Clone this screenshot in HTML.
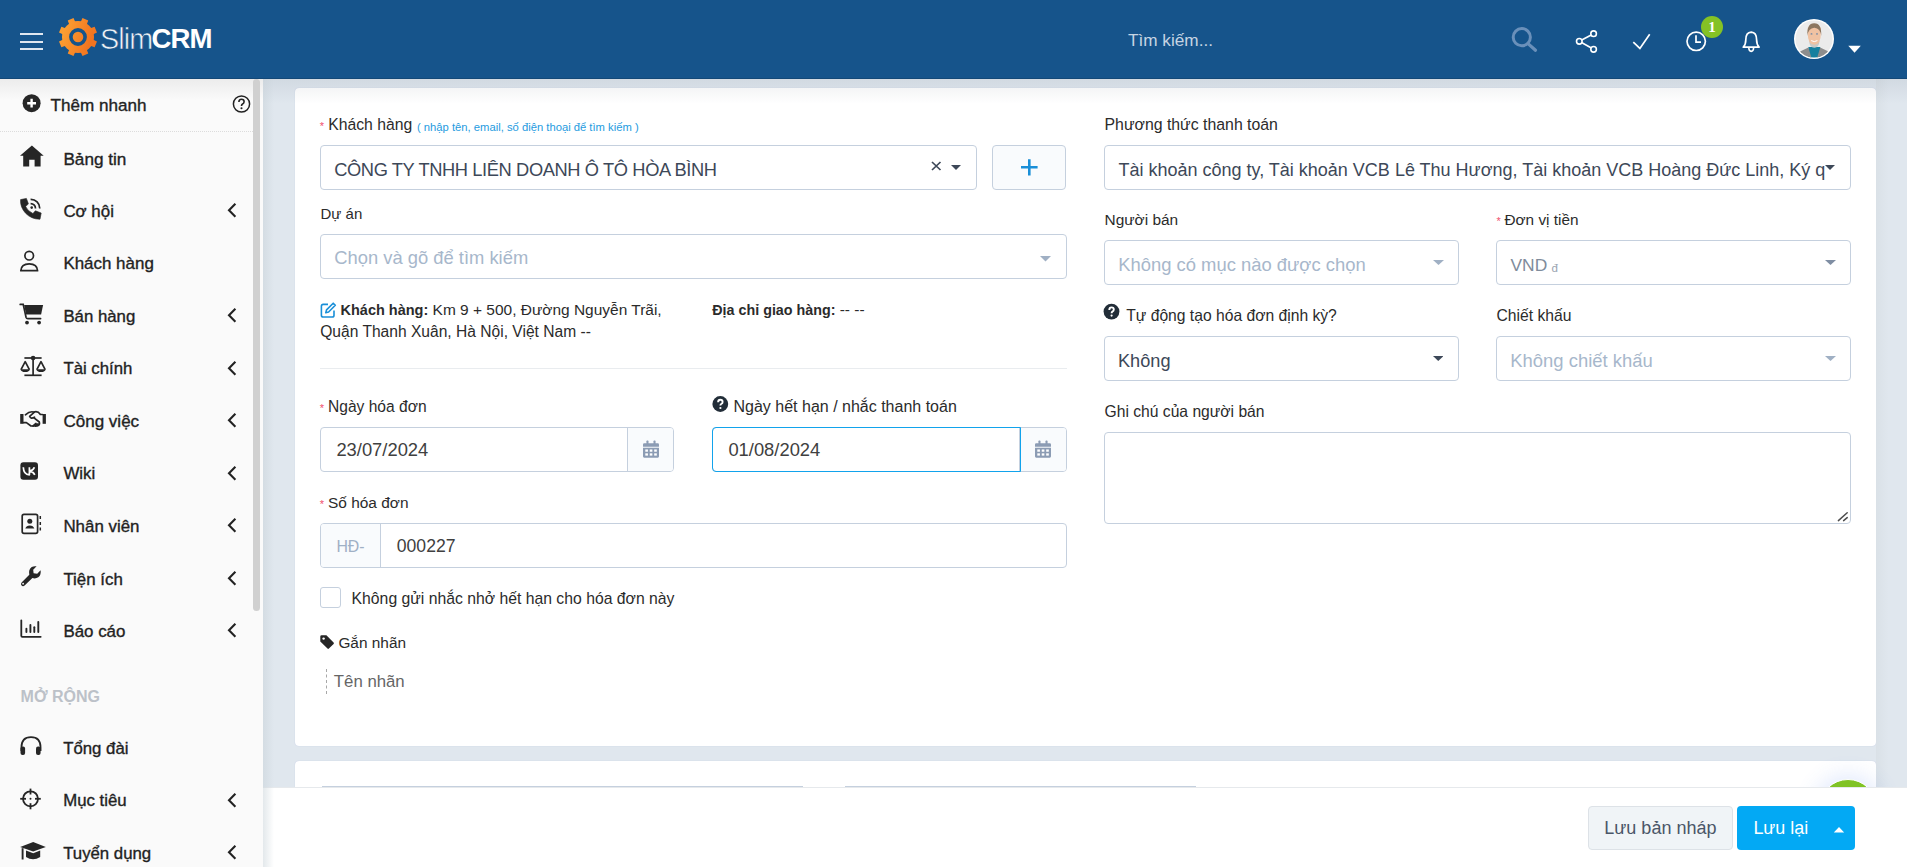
<!DOCTYPE html>
<html><head><meta charset="utf-8"><title>SlimCRM</title>
<style>
html,body{margin:0;padding:0;}
body{width:1907px;height:867px;overflow:hidden;position:relative;font-family:"Liberation Sans",sans-serif;background:#e0e7ee;}
.t{position:absolute;line-height:0;white-space:nowrap;}
</style></head><body>

<div style="position:absolute;left:295px;top:88px;width:1581px;height:658px;background:#fff;border-radius:4px;box-shadow:0 0 1px rgba(90,100,190,0.3);"></div>
<div style="position:absolute;left:295px;top:761px;width:1581px;height:39px;background:#fff;border-radius:4px;box-shadow:0 0 1px rgba(90,100,190,0.3);"></div>
<div style="position:absolute;left:1876px;top:79px;width:31px;height:708px;background:linear-gradient(90deg,#dae1e7,#e0e7ee 40%);"></div>
<div class="t" style="left:319.8px;top:125.99px;font-size:11px;color:#f0506e;font-weight:400;">*</div>
<div class="t" style="left:328.2px;top:124.95px;font-size:15.74px;color:#2b2b2b;font-weight:400;">Khách hàng</div>
<div class="t" style="left:417.0px;top:126.51px;font-size:11.24px;color:#1e9be0;font-weight:400;">( nhập tên, email, số điện thoại để tìm kiếm )</div>
<div style="position:absolute;left:320px;top:145px;width:657px;height:45px;box-sizing:border-box;border:1px solid #c5d0de;border-radius:4px;background:#fff;"></div>
<div class="t" style="left:334.2px;top:169.86px;font-size:18.3px;color:#3d4858;font-weight:400;letter-spacing:-0.39px;">CÔNG TY TNHH LIÊN DOANH Ô TÔ HÒA BÌNH</div>
<svg style="position:absolute;left:930.5px;top:161px;" width="11" height="10" viewBox="0 0 11 10"><path d="M1,1 L9.5,9 M9.5,1 L1,9" stroke="#3d4858" stroke-width="1.7"/></svg>
<svg style="position:absolute;left:951.3px;top:164.8px;" width="10" height="5" viewBox="0 0 10 5"><polygon points="0,0 10,0 5.0,5" fill="#3d4858"/></svg>
<div style="position:absolute;left:992px;top:145px;width:74px;height:45px;box-sizing:border-box;border:1px solid #c5d0de;border-radius:4px;background:#f9fbfd;"></div>
<svg style="position:absolute;left:1020px;top:158px;" width="18" height="18" viewBox="0 0 18 18"><path d="M9.3,1.2 V17.6 M1,9.3 H17.6" stroke="#1a8fd8" stroke-width="2.6"/></svg>
<div class="t" style="left:320.5px;top:214.10px;font-size:15.0px;color:#2b2b2b;font-weight:400;">Dự án</div>
<div style="position:absolute;left:320px;top:234px;width:747px;height:45px;box-sizing:border-box;border:1px solid #c5d0de;border-radius:4px;background:#fff;"></div>
<div class="t" style="left:334.3px;top:258.43px;font-size:18.37px;color:#a7b7cb;font-weight:400;">Chọn và gõ để tìm kiếm</div>
<svg style="position:absolute;left:1040px;top:256px;" width="11" height="5.5" viewBox="0 0 11 5.5"><polygon points="0,0 11,0 5.5,5.5" fill="#a0b0c4"/></svg>
<svg style="position:absolute;left:319.5px;top:300.5px;" width="17" height="17" viewBox="0 0 17 17"><path d="M13.2,2.2 L15.3,4.3 L8.6,11 L5.8,11.7 L6.5,8.9 Z" fill="none" stroke="#1a8fd8" stroke-width="1.6" stroke-linejoin="round"/><path d="M8,3.4 H3.2 Q1.4,3.4 1.4,5.2 V14.2 Q1.4,16 3.2,16 H12.2 Q14,16 14,14.2 V9.4" fill="none" stroke="#1a8fd8" stroke-width="1.6"/></svg>
<div class="t" style="left:340.5px;top:309.94px;font-size:15.47px;color:#2b2b2b;font-weight:400;"><b style="font-size:14.5px">Khách hàng:</b> Km 9 + 500, Đường Nguyễn Trãi,</div>
<div class="t" style="left:320.2px;top:332.39px;font-size:15.6px;color:#2b2b2b;font-weight:400;">Quận Thanh Xuân, Hà Nội, Việt Nam --</div>
<div class="t" style="left:712.3px;top:309.94px;font-size:15.47px;color:#2b2b2b;font-weight:400;"><b style="font-size:14.3px">Địa chỉ giao hàng:</b> -- --</div>
<div style="position:absolute;left:320px;top:368px;width:747px;height:1px;background:#e9ecef;"></div>
<div class="t" style="left:319.8px;top:407.99px;font-size:11px;color:#f0506e;font-weight:400;">*</div>
<div class="t" style="left:328.0px;top:407.00px;font-size:15.58px;color:#2b2b2b;font-weight:400;">Ngày hóa đơn</div>
<div style="position:absolute;left:320px;top:427px;width:354px;height:45px;box-sizing:border-box;border:1px solid #c5d0de;border-radius:4px;background:#fff;"></div>
<div style="position:absolute;left:627px;top:428px;width:46px;height:43px;background:#f9fbfd;border-radius:0 3px 3px 0;"></div>
<div style="position:absolute;left:627px;top:428px;width:1px;height:43px;background:#c5d0de;"></div>
<div class="t" style="left:336.4px;top:450.43px;font-size:18.38px;color:#404040;font-weight:400;">23/07/2024</div>
<svg style="position:absolute;left:642px;top:438.5px;transform:scale(1.14);transform-origin:9px 10px;" width="18" height="20" viewBox="0 0 18 20"><path d="M3,5 H15 Q16,5 16,6 V8 H2 V6 Q2,5 3,5 Z M2,9 H16 V16.6 Q16,17.6 15,17.6 H3 Q2,17.6 2,16.6 Z" fill="#8c9cb4"/><rect x="5" y="2.6" width="1.8" height="3.6" rx="0.6" fill="#8c9cb4"/><rect x="11.2" y="2.6" width="1.8" height="3.6" rx="0.6" fill="#8c9cb4"/><g fill="#fff"><rect x="4" y="10.4" width="2.3" height="2"/><rect x="7.9" y="10.4" width="2.3" height="2"/><rect x="11.8" y="10.4" width="2.3" height="2"/><rect x="4" y="13.8" width="2.3" height="2"/><rect x="7.9" y="13.8" width="2.3" height="2"/><rect x="11.8" y="13.8" width="2.3" height="2"/></g></svg>
<svg style="position:absolute;left:711.5px;top:395.5px;" width="17" height="17" viewBox="0 0 17 17"><circle cx="8.3" cy="8" r="7.9" fill="#222d38"/><path d="M6.1,6.3 Q6.1,3.8 8.3,3.8 Q10.6,3.8 10.6,6 Q10.6,7.3 9.2,8 Q8.4,8.5 8.4,9.6" fill="none" stroke="#fff" stroke-width="1.9"/><circle cx="8.4" cy="12" r="1.1" fill="#fff"/></svg>
<div class="t" style="left:733.5px;top:406.86px;font-size:16.0px;color:#2b2b2b;font-weight:400;">Ngày hết hạn / nhắc thanh toán</div>
<div style="position:absolute;left:712px;top:427px;width:355px;height:45px;box-sizing:border-box;border:1px solid #c5d0de;border-radius:4px;background:#fff;"></div>
<div style="position:absolute;left:1019px;top:428px;width:47px;height:43px;background:#f9fbfd;border-radius:0 3px 3px 0;"></div>
<div style="position:absolute;left:1019px;top:428px;width:1px;height:43px;background:#c5d0de;"></div>
<div style="position:absolute;left:712px;top:427px;width:309px;height:45px;box-sizing:border-box;border:1.3px solid #12a3ec;border-radius:4px 0 0 4px;"></div>
<div class="t" style="left:728.4px;top:450.43px;font-size:18.38px;color:#404040;font-weight:400;">01/08/2024</div>
<svg style="position:absolute;left:1034px;top:438.5px;transform:scale(1.14);transform-origin:9px 10px;" width="18" height="20" viewBox="0 0 18 20"><path d="M3,5 H15 Q16,5 16,6 V8 H2 V6 Q2,5 3,5 Z M2,9 H16 V16.6 Q16,17.6 15,17.6 H3 Q2,17.6 2,16.6 Z" fill="#8c9cb4"/><rect x="5" y="2.6" width="1.8" height="3.6" rx="0.6" fill="#8c9cb4"/><rect x="11.2" y="2.6" width="1.8" height="3.6" rx="0.6" fill="#8c9cb4"/><g fill="#fff"><rect x="4" y="10.4" width="2.3" height="2"/><rect x="7.9" y="10.4" width="2.3" height="2"/><rect x="11.8" y="10.4" width="2.3" height="2"/><rect x="4" y="13.8" width="2.3" height="2"/><rect x="7.9" y="13.8" width="2.3" height="2"/><rect x="11.8" y="13.8" width="2.3" height="2"/></g></svg>
<div class="t" style="left:319.8px;top:503.99px;font-size:11px;color:#f0506e;font-weight:400;">*</div>
<div class="t" style="left:328.0px;top:503.05px;font-size:15.45px;color:#2b2b2b;font-weight:400;">Số hóa đơn</div>
<div style="position:absolute;left:320px;top:523px;width:747px;height:45px;box-sizing:border-box;border:1px solid #c5d0de;border-radius:4px;background:#fff;"></div>
<div style="position:absolute;left:321px;top:524px;width:59px;height:43px;background:#f9fbfd;border-radius:3px 0 0 3px;"></div>
<div style="position:absolute;left:380px;top:524px;width:1px;height:43px;background:#c5d0de;"></div>
<div class="t" style="left:336.4px;top:546.69px;font-size:15.9px;color:#a0b0c5;font-weight:400;">HĐ-</div>
<div class="t" style="left:396.8px;top:546.10px;font-size:17.6px;color:#404040;font-weight:400;">000227</div>
<div style="position:absolute;left:320px;top:587px;width:21px;height:21px;box-sizing:border-box;border:1px solid #c5d0de;border-radius:3px;background:#fff;"></div>
<div class="t" style="left:351.6px;top:598.54px;font-size:15.75px;color:#2b2b2b;font-weight:400;">Không gửi nhắc nhở hết hạn cho hóa đơn này</div>
<svg style="position:absolute;left:318.5px;top:634px;" width="16" height="16" viewBox="0 0 16 16"><path d="M1.3,2.6 Q1.3,1.3 2.6,1.3 L7.4,1.3 L14.6,8.5 Q15.3,9.2 14.6,9.9 L9.9,14.6 Q9.2,15.3 8.5,14.6 L1.3,7.4 Z" fill="#262626"/><circle cx="4.6" cy="4.6" r="1.2" fill="#fff"/></svg>
<div class="t" style="left:338.4px;top:642.66px;font-size:15.4px;color:#2b2b2b;font-weight:400;">Gắn nhãn</div>
<div style="position:absolute;left:326px;top:669px;width:0;height:25px;border-left:1px dashed #a8a8a8;"></div>
<div class="t" style="left:333.8px;top:682.18px;font-size:16.8px;color:#666;font-weight:400;">Tên nhãn</div>
<div class="t" style="left:1104.5px;top:124.91px;font-size:15.85px;color:#2b2b2b;font-weight:400;">Phương thức thanh toán</div>
<div style="position:absolute;left:1104px;top:145px;width:747px;height:45px;box-sizing:border-box;border:1px solid #c5d0de;border-radius:4px;background:#fff;"></div>
<div style="position:absolute;left:1118px;top:150px;width:707px;height:36px;overflow:hidden;"><div class="t" style="left:0.4px;top:20.26px;font-size:18.0px;color:#3d4858;">Tài khoản công ty, Tài khoản VCB Lê Thu Hương, Tài khoản VCB Hoàng Đức Linh, Ký quỹ</div></div>
<svg style="position:absolute;left:1825px;top:165.2px;" width="10" height="5" viewBox="0 0 10 5"><polygon points="0,0 10,0 5.0,5" fill="#3d4858"/></svg>
<div class="t" style="left:1104.5px;top:219.85px;font-size:15.44px;color:#2b2b2b;font-weight:400;">Người bán</div>
<div style="position:absolute;left:1104px;top:240px;width:355px;height:45px;box-sizing:border-box;border:1px solid #c5d0de;border-radius:4px;background:#fff;"></div>
<div class="t" style="left:1118.2px;top:264.82px;font-size:18.42px;color:#a7b7cb;font-weight:400;">Không có mục nào được chọn</div>
<svg style="position:absolute;left:1432.5px;top:260.3px;" width="11" height="5" viewBox="0 0 11 5"><polygon points="0,0 11,0 5.5,5" fill="#a0b0c4"/></svg>
<div class="t" style="left:1496.5px;top:220.79px;font-size:11px;color:#f0506e;font-weight:400;">*</div>
<div class="t" style="left:1504.5px;top:219.88px;font-size:15.34px;color:#2b2b2b;font-weight:400;">Đơn vị tiền</div>
<div style="position:absolute;left:1496px;top:240px;width:355px;height:45px;box-sizing:border-box;border:1px solid #c5d0de;border-radius:4px;background:#fff;"></div>
<div class="t" style="left:1510.5px;top:265.17px;font-size:17.4px;color:#7f8c9c;font-weight:400;">VND</div>
<div class="t" style="left:1551.5px;top:267.52px;font-size:11.5px;color:#98a3b0;font-weight:400;">đ</div>
<svg style="position:absolute;left:1824.5px;top:260.3px;" width="11" height="5" viewBox="0 0 11 5"><polygon points="0,0 11,0 5.5,5" fill="#7f8ea3"/></svg>
<svg style="position:absolute;left:1103px;top:303px;" width="18" height="18" viewBox="0 0 18 18"><circle cx="8.5" cy="8.6" r="7.9" fill="#222d38"/><path d="M6.3,6.9 Q6.3,4.4 8.5,4.4 Q10.8,4.4 10.8,6.6 Q10.8,7.9 9.4,8.6 Q8.6,9.1 8.6,10.2" fill="none" stroke="#fff" stroke-width="1.9"/><circle cx="8.6" cy="12.6" r="1.1" fill="#fff"/></svg>
<div class="t" style="left:1126.3px;top:316.07px;font-size:15.66px;color:#2b2b2b;font-weight:400;">Tự động tạo hóa đơn định kỳ?</div>
<div style="position:absolute;left:1104px;top:336px;width:355px;height:45px;box-sizing:border-box;border:1px solid #c5d0de;border-radius:4px;background:#fff;"></div>
<div class="t" style="left:1118.0px;top:361.31px;font-size:18.16px;color:#3d4858;font-weight:400;">Không</div>
<svg style="position:absolute;left:1432.7px;top:356px;" width="10.5" height="5" viewBox="0 0 10.5 5"><polygon points="0,0 10.5,0 5.25,5" fill="#3d4858"/></svg>
<div class="t" style="left:1496.5px;top:316.06px;font-size:15.69px;color:#2b2b2b;font-weight:400;">Chiết khấu</div>
<div style="position:absolute;left:1496px;top:336px;width:355px;height:45px;box-sizing:border-box;border:1px solid #c5d0de;border-radius:4px;background:#fff;"></div>
<div class="t" style="left:1510.3px;top:361.21px;font-size:18.45px;color:#a7b7cb;font-weight:400;">Không chiết khấu</div>
<svg style="position:absolute;left:1824.5px;top:356.3px;" width="11" height="5" viewBox="0 0 11 5"><polygon points="0,0 11,0 5.5,5" fill="#a0b0c4"/></svg>
<div class="t" style="left:1104.5px;top:411.87px;font-size:15.66px;color:#2b2b2b;font-weight:400;">Ghi chú của người bán</div>
<textarea style="position:absolute;left:1104px;top:432px;width:747px;height:92px;box-sizing:border-box;border:1px solid #c5d0de;border-radius:4px;background:#fff;outline:none;margin:0;padding:0;resize:none;"></textarea>
<svg style="position:absolute;left:1834px;top:509px;" width="16" height="14" viewBox="0 0 16 14"><g stroke="#4d4d4d" stroke-width="1.5" stroke-linecap="round"><line x1="4.4" y1="11.6" x2="13.2" y2="3.8"/><line x1="9.6" y1="11.6" x2="13.2" y2="8.6"/></g></svg>
<div style="position:absolute;left:322px;top:786px;width:481px;height:1px;background:#c5d0de;"></div>
<div style="position:absolute;left:845px;top:786px;width:351px;height:1px;background:#c5d0de;"></div>
<div style="position:absolute;left:1819px;top:778.8px;width:58px;height:58px;box-sizing:border-box;border:1.2px solid #fff;border-radius:50%;background:#80c325;box-shadow:0 0 22px 4px rgba(70,120,240,0.16);"></div>
<div style="position:absolute;left:263px;top:79px;width:1644px;height:25px;background:linear-gradient(rgba(30,50,70,0.075),rgba(30,50,70,0));"></div>
<div style="position:absolute;left:263px;top:787px;width:1644px;height:80px;background:#fff;border-top:1px solid #e6e9ec;box-sizing:border-box;"></div>
<div style="position:absolute;left:1588px;top:806px;width:145px;height:44px;box-sizing:border-box;border:1px solid #dde2e7;border-radius:4px;background:#f0f4f7;"></div>
<div class="t" style="left:1604.3px;top:827.56px;font-size:18.0px;color:#4a5668;font-weight:400;">Lưu bản nháp</div>
<div style="position:absolute;left:1737px;top:806px;width:118px;height:44px;border-radius:4px;background:#03a9f4;"></div>
<div class="t" style="left:1753.4px;top:827.60px;font-size:17.9px;color:#fff;font-weight:400;">Lưu lại</div>
<svg style="position:absolute;left:1833px;top:826px;" width="12" height="7" viewBox="0 0 12 7"><polygon points="0.8,6.5 11.2,6.5 6,1" fill="#fff"/></svg>
<div style="position:absolute;left:0px;top:79px;width:263px;height:788px;background:#fafafa;"></div>
<div style="position:absolute;left:0px;top:79px;width:263px;height:21px;background:linear-gradient(#ececec,rgba(250,250,250,0));"></div>
<div style="position:absolute;left:263px;top:79px;width:11px;height:788px;background:linear-gradient(90deg,rgba(200,210,216,0.5),rgba(224,231,238,0));"></div>
<div style="position:absolute;left:253px;top:79px;width:7px;height:532px;border-radius:3.5px;background:#d0d0d0;"></div>
<svg style="position:absolute;left:22px;top:94px;" width="20" height="20" viewBox="0 0 20 20"><circle cx="9.6" cy="9.2" r="9" fill="#262626"/><path d="M9.6,4.8 V13.6 M5.2,9.2 H14" stroke="#fff" stroke-width="2.4"/></svg>
<div class="t" style="left:50.5px;top:105.87px;font-size:17.1px;color:#222;font-weight:400;-webkit-text-stroke:0.35px #222;">Thêm nhanh</div>
<svg style="position:absolute;left:231px;top:94px;" width="20" height="20" viewBox="0 0 20 20"><circle cx="10.5" cy="10" r="8.1" fill="none" stroke="#222" stroke-width="1.5"/><path d="M7.9,8.1 Q7.9,5.3 10.5,5.3 Q13.1,5.3 13.1,7.7 Q13.1,9.3 11.3,10.2 Q10.5,10.7 10.5,11.9" fill="none" stroke="#222" stroke-width="1.6"/><circle cx="10.5" cy="14.3" r="1.05" fill="#222"/></svg>
<div style="position:absolute;left:0;top:131px;width:253px;height:0;border-top:1px dotted #dcdcdc;"></div>
<svg style="position:absolute;left:14px;top:138px;" width="36" height="36" viewBox="0 0 36 36"><path d="M6,17.8 L17.9,7.6 L29.7,17.8 L26.6,17.8 L26.6,28.4 L20.6,28.4 L20.6,21.8 L15.2,21.8 L15.2,28.4 L9.2,28.4 L9.2,17.8 Z" fill="#262626"/></svg>
<div class="t" style="left:63.4px;top:159.05px;font-size:17.17px;color:#222;font-weight:400;-webkit-text-stroke:0.35px #222;">Bảng tin</div>
<svg style="position:absolute;left:14px;top:190px;" width="36" height="36" viewBox="0 0 36 36"><path d="M6.6,9.6 L12.4,8.4 L14.4,13.8 L11.7,16.6 Q13.6,20.9 18.9,23.5 L21.4,20.8 L27.2,23 L26,29.2 C14.5,29.5 5.6,19.5 6.6,9.6 Z" fill="#262626" stroke="#262626" stroke-width="0.6" stroke-linejoin="round"/><circle cx="17.7" cy="17.6" r="1.3" fill="#262626"/><path d="M16.6,13.6 A4.8,4.8 0 0 1 21.5,18.4" fill="none" stroke="#262626" stroke-width="1.7"/><path d="M16.6,9.4 A9,9 0 0 1 25.8,18.4" fill="none" stroke="#262626" stroke-width="1.7"/></svg>
<div class="t" style="left:63.4px;top:211.69px;font-size:16.9px;color:#222;font-weight:400;-webkit-text-stroke:0.35px #222;">Cơ hội</div>
<svg style="position:absolute;left:224px;top:202px;" width="14" height="16" viewBox="0 0 14 16"><polyline points="11.4,1.8 5,8.3 11.4,14.8" fill="none" stroke="#222" stroke-width="2.1"/></svg>
<svg style="position:absolute;left:14px;top:243px;" width="36" height="36" viewBox="0 0 36 36"><circle cx="15.2" cy="12.7" r="4.3" fill="none" stroke="#262626" stroke-width="1.7"/><path d="M6.8,27.7 Q7.2,20.8 15.2,20.8 Q23.2,20.8 23.6,27.7 Z" fill="none" stroke="#262626" stroke-width="1.7" stroke-linejoin="round"/></svg>
<div class="t" style="left:63.4px;top:264.23px;font-size:16.94px;color:#222;font-weight:400;-webkit-text-stroke:0.35px #222;">Khách hàng</div>
<svg style="position:absolute;left:14px;top:295px;" width="36" height="36" viewBox="0 0 36 36"><path d="M6.2,9.4 L9.2,9.4 L12.1,22.4 Q12.5,23.6 13.8,23.6 L26.6,23.6" fill="none" stroke="#262626" stroke-width="1.7" stroke-linecap="round"/><path d="M10.1,10.1 L29.1,10.1 L27.1,19.4 L12.1,19.4 Z" fill="#262626"/><circle cx="13" cy="27.6" r="1.9" fill="#262626"/><circle cx="25.1" cy="27.6" r="1.9" fill="#262626"/></svg>
<div class="t" style="left:63.4px;top:316.83px;font-size:16.79px;color:#222;font-weight:400;-webkit-text-stroke:0.35px #222;">Bán hàng</div>
<svg style="position:absolute;left:224px;top:307px;" width="14" height="16" viewBox="0 0 14 16"><polyline points="11.4,1.8 5,8.3 11.4,14.8" fill="none" stroke="#222" stroke-width="2.1"/></svg>
<svg style="position:absolute;left:14px;top:348px;" width="36" height="36" viewBox="0 0 36 36"><g fill="none" stroke="#262626" stroke-width="1.7" stroke-linejoin="round"><line x1="10.4" y1="10" x2="27.6" y2="10"/><line x1="10.4" y1="27.3" x2="27.6" y2="27.3"/><line x1="19.1" y1="10" x2="19.1" y2="27.3"/><path d="M7,21.7 L11.2,13.7 L15.4,21.7"/><path d="M22.8,21.7 L27,13.7 L31.2,21.7"/></g><circle cx="19.1" cy="10" r="2.3" fill="#262626"/><path d="M6.5,21.2 L15.9,21.2 Q15.4,24 11.2,24 Q7,24 6.5,21.2 Z M22.3,21.2 L31.7,21.2 Q31.2,24 27,24 Q22.8,24 22.3,21.2 Z" fill="#262626"/></svg>
<div class="t" style="left:63.4px;top:369.39px;font-size:16.77px;color:#222;font-weight:400;-webkit-text-stroke:0.35px #222;">Tài chính</div>
<svg style="position:absolute;left:224px;top:360px;" width="14" height="16" viewBox="0 0 14 16"><polyline points="11.4,1.8 5,8.3 11.4,14.8" fill="none" stroke="#222" stroke-width="2.1"/></svg>
<svg style="position:absolute;left:14px;top:400px;" width="36" height="36" viewBox="0 0 36 36"><g fill="none" stroke="#262626" stroke-width="1.7" stroke-linejoin="round" stroke-linecap="round"><path d="M9.6,22.6 L12.4,22.6 L17,26 L23.2,26 Q26.2,25 25.3,22 L20,17.8"/><path d="M11.4,14.8 Q16,10.6 20.4,12.2 L15.6,16.3 Q16.6,19.4 20.5,17.2"/><path d="M20,12 Q23.8,10.6 26.4,14.5 L28.4,14.5"/><path d="M19,26 L22,23.5 M21.5,26 L24,24"/></g><rect x="6.2" y="14" width="3.3" height="9.8" fill="#262626"/><rect x="28.6" y="14" width="3.3" height="9.8" fill="#262626"/></svg>
<div class="t" style="left:63.4px;top:421.84px;font-size:17.05px;color:#222;font-weight:400;-webkit-text-stroke:0.35px #222;">Công việc</div>
<svg style="position:absolute;left:224px;top:412px;" width="14" height="16" viewBox="0 0 14 16"><polyline points="11.4,1.8 5,8.3 11.4,14.8" fill="none" stroke="#222" stroke-width="2.1"/></svg>
<svg style="position:absolute;left:14px;top:455px;" width="36" height="36" viewBox="0 0 36 36"><rect x="6.4" y="7.2" width="17.6" height="17.6" rx="3" fill="#262626"/><path d="M9.3,12.2 Q9.6,19.6 15.4,19.8 L15.4,12.2 M15.4,16.2 Q19.2,15.6 20.4,12.2 M15.4,16.2 Q19.2,16.8 20.8,19.8" fill="none" stroke="#fff" stroke-width="1.7" stroke-linejoin="round"/></svg>
<div class="t" style="left:63.4px;top:474.44px;font-size:16.9px;color:#222;font-weight:400;-webkit-text-stroke:0.35px #222;">Wiki</div>
<svg style="position:absolute;left:224px;top:465px;" width="14" height="16" viewBox="0 0 14 16"><polyline points="11.4,1.8 5,8.3 11.4,14.8" fill="none" stroke="#222" stroke-width="2.1"/></svg>
<svg style="position:absolute;left:14px;top:508px;" width="36" height="36" viewBox="0 0 36 36"><rect x="8.2" y="6.4" width="15.4" height="19" rx="1.8" fill="none" stroke="#262626" stroke-width="1.7"/><circle cx="15.8" cy="13.3" r="2.5" fill="#262626"/><path d="M11.3,20.6 Q12.3,17.6 15.8,17.6 Q19.3,17.6 20.3,20.6 Z" fill="#262626"/><path d="M26.3,8 V11 M26.3,14 V17 M26.3,19.4 V22.5" stroke="#262626" stroke-width="1.5"/></svg>
<div class="t" style="left:63.4px;top:526.99px;font-size:16.9px;color:#222;font-weight:400;-webkit-text-stroke:0.35px #222;">Nhân viên</div>
<svg style="position:absolute;left:224px;top:517px;" width="14" height="16" viewBox="0 0 14 16"><polyline points="11.4,1.8 5,8.3 11.4,14.8" fill="none" stroke="#222" stroke-width="2.1"/></svg>
<svg style="position:absolute;left:14px;top:560px;" width="36" height="36" viewBox="0 0 36 36"><path d="M7.6,22.4 L15.3,14.8 Q14.2,9.6 17.7,7.1 Q19.9,5.8 22.6,6.3 L19.2,9.8 L19.6,13.2 L23.2,13.7 L26.6,10.2 Q27.4,14.8 24.3,17.3 Q21.4,19.1 18.4,18 L10.6,25.6 Q8.7,26.8 7.4,25.3 Q6.4,23.7 7.6,22.4 Z" fill="#262626"/><circle cx="9.1" cy="23.7" r="0.9" fill="#f9f9f9"/></svg>
<div class="t" style="left:63.4px;top:579.54px;font-size:16.9px;color:#222;font-weight:400;-webkit-text-stroke:0.35px #222;">Tiện ích</div>
<svg style="position:absolute;left:224px;top:570px;" width="14" height="16" viewBox="0 0 14 16"><polyline points="11.4,1.8 5,8.3 11.4,14.8" fill="none" stroke="#222" stroke-width="2.1"/></svg>
<svg style="position:absolute;left:14px;top:613px;" width="36" height="36" viewBox="0 0 36 36"><path d="M7.3,7.3 V22.8 Q7.3,23.8 8.3,23.8 H26.7" fill="none" stroke="#262626" stroke-width="1.8" stroke-linecap="round"/><g stroke="#262626" stroke-width="1.9" stroke-linecap="round"><line x1="12.4" y1="15.8" x2="12.4" y2="19.1"/><line x1="16.4" y1="11.9" x2="16.4" y2="19.1"/><line x1="20.3" y1="14.2" x2="20.3" y2="19.1"/><line x1="24.3" y1="9" x2="24.3" y2="19.1"/></g></svg>
<div class="t" style="left:63.4px;top:632.09px;font-size:16.9px;color:#222;font-weight:400;-webkit-text-stroke:0.35px #222;">Báo cáo</div>
<svg style="position:absolute;left:224px;top:622px;" width="14" height="16" viewBox="0 0 14 16"><polyline points="11.4,1.8 5,8.3 11.4,14.8" fill="none" stroke="#222" stroke-width="2.1"/></svg>
<div class="t" style="left:20.6px;top:697.16px;font-size:16.0px;color:#bcc1c8;font-weight:700;">MỞ RỘNG</div>
<svg style="position:absolute;left:14px;top:730px;" width="36" height="36" viewBox="0 0 36 36"><path d="M7.4,21 V17.6 Q7.4,7.2 17,7.2 Q26.6,7.2 26.6,17.6 V21" fill="none" stroke="#262626" stroke-width="1.7"/><rect x="6.5" y="16.5" width="4.6" height="8.5" rx="2" fill="#262626"/><rect x="22" y="16.5" width="4.6" height="8.5" rx="2" fill="#262626"/></svg>
<div class="t" style="left:63.2px;top:748.98px;font-size:16.8px;color:#222;font-weight:400;-webkit-text-stroke:0.35px #222;">Tổng đài</div>
<svg style="position:absolute;left:14px;top:783px;" width="36" height="36" viewBox="0 0 36 36"><circle cx="16.5" cy="15.8" r="7.5" fill="none" stroke="#262626" stroke-width="1.8"/><g stroke="#262626" stroke-width="1.8"><line x1="16.5" y1="5.6" x2="16.5" y2="11.5"/><line x1="16.5" y1="20.2" x2="16.5" y2="26.3"/><line x1="6.2" y1="15.8" x2="12" y2="15.8"/><line x1="21" y1="15.8" x2="26.8" y2="15.8"/></g><circle cx="16.5" cy="15.8" r="1" fill="#262626"/></svg>
<div class="t" style="left:63.2px;top:801.38px;font-size:16.8px;color:#222;font-weight:400;-webkit-text-stroke:0.35px #222;">Mục tiêu</div>
<svg style="position:absolute;left:224px;top:792px;" width="14" height="16" viewBox="0 0 14 16"><polyline points="11.4,1.8 5,8.3 11.4,14.8" fill="none" stroke="#222" stroke-width="2.1"/></svg>
<svg style="position:absolute;left:14px;top:835px;" width="36" height="36" viewBox="0 0 36 36"><path d="M6.2,12 L19.2,7 L31.8,12 L19.2,16.5 Z" fill="#262626"/><path d="M12,15.5 V22 Q19,26.5 26.2,22 V15.5 L19.2,18.2 Z" fill="#262626"/><path d="M8.6,13.2 V24.5" stroke="#262626" stroke-width="1.9"/></svg>
<div class="t" style="left:63.2px;top:853.68px;font-size:16.8px;color:#222;font-weight:400;-webkit-text-stroke:0.35px #222;">Tuyển dụng</div>
<svg style="position:absolute;left:224px;top:844px;" width="14" height="16" viewBox="0 0 14 16"><polyline points="11.4,1.8 5,8.3 11.4,14.8" fill="none" stroke="#222" stroke-width="2.1"/></svg>
<div style="position:absolute;left:0px;top:0px;width:1907px;height:79px;background:#16548b;"></div>
<div style="position:absolute;left:0px;top:78px;width:1907px;height:1px;background:#134877;"></div>
<div style="position:absolute;left:20px;top:33.1px;width:23px;height:2px;background:#dfe7f0;"></div>
<div style="position:absolute;left:20px;top:40.7px;width:23px;height:2px;background:#dfe7f0;"></div>
<div style="position:absolute;left:20px;top:47.9px;width:23px;height:2px;background:#dfe7f0;"></div>
<svg style="position:absolute;left:57.5px;top:17.3px;" width="40" height="40" viewBox="0 0 40 40"><defs><linearGradient id="gg" x1="0" y1="0" x2="1" y2="0.3"><stop offset="0" stop-color="#fda535"/><stop offset="1" stop-color="#f2741f"/></linearGradient></defs>
<path d="M22.35,5.69 L24.50,1.03 L30.24,3.40 L28.46,8.22 L31.78,11.54 L36.60,9.76 L38.97,15.50 L34.31,17.65 L34.31,22.35 L38.97,24.50 L36.60,30.24 L31.78,28.46 L28.46,31.78 L30.24,36.60 L24.50,38.97 L22.35,34.31 L17.65,34.31 L15.50,38.97 L9.76,36.60 L11.54,31.78 L8.22,28.46 L3.40,30.24 L1.03,24.50 L5.69,22.35 L5.69,17.65 L1.03,15.50 L3.40,9.76 L8.22,11.54 L11.54,8.22 L9.76,3.40 L15.50,1.03 L17.65,5.69 Z" fill="url(#gg)"/>
<circle cx="20" cy="20" r="16" fill="url(#gg)"/>
<circle cx="20" cy="20" r="7.1" fill="none" stroke="#16548b" stroke-width="3.6"/></svg>
<div class="t" style="left:100.0px;top:38.52px;font-size:28.8px;color:#eef2f6;font-weight:400;letter-spacing:-0.9px;-webkit-text-stroke:0.6px #16548b;">Slim</div>
<div class="t" style="left:151.5px;top:38.94px;font-size:27.6px;color:#ffffff;font-weight:700;letter-spacing:-0.9px;">CRM</div>
<div class="t" style="left:1128.0px;top:39.84px;font-size:17.2px;color:#c6d4e3;font-weight:400;">Tìm kiếm...</div>
<svg style="position:absolute;left:1505px;top:20px;" width="36" height="36" viewBox="0 0 36 36"><circle cx="16.8" cy="17.2" r="8.6" fill="none" stroke="#6a90ba" stroke-width="3"/><line x1="23" y1="23.6" x2="30.5" y2="30.3" stroke="#6a90ba" stroke-width="3.2" stroke-linecap="round"/></svg>
<svg style="position:absolute;left:1570px;top:20px;" width="36" height="36" viewBox="0 0 36 36"><g fill="none" stroke="#fff" stroke-width="1.6"><line x1="9.3" y1="21.3" x2="23.6" y2="13.7"/><line x1="9.3" y1="21.3" x2="23.6" y2="29.3"/><circle cx="9.3" cy="21.3" r="2.8" fill="#16548b"/><circle cx="23.6" cy="13.7" r="2.8" fill="#16548b"/><circle cx="23.6" cy="29.3" r="2.8" fill="#16548b"/></g></svg>
<svg style="position:absolute;left:1625px;top:20px;" width="36" height="36" viewBox="0 0 36 36"><polyline points="8.3,22.2 14.9,28.4 24.7,14.2" fill="none" stroke="#fff" stroke-width="1.7"/></svg>
<svg style="position:absolute;left:1678px;top:23px;" width="36" height="36" viewBox="0 0 36 36"><circle cx="18.2" cy="18.3" r="9.2" fill="none" stroke="#fff" stroke-width="1.7"/><polyline points="18,12.2 18,19.1 23,19.1" fill="none" stroke="#fff" stroke-width="1.7"/></svg>
<div style="position:absolute;left:1701px;top:15.8px;width:22px;height:22px;border-radius:50%;background:#84c225;"></div>
<div class="t" style="left:1701px;top:27px;width:22px;text-align:center;font-family:'Liberation Serif',serif;font-weight:700;font-size:15px;color:#fff;">1</div>
<svg style="position:absolute;left:1733px;top:23px;" width="36" height="36" viewBox="0 0 36 36"><path d="M10.3,24.2 Q12.8,21.6 12.8,16.8 Q12.8,9.6 18.2,9.2 Q23.6,9.6 23.6,16.8 Q23.6,21.6 26.1,24.2 Z" fill="none" stroke="#fff" stroke-width="1.7" stroke-linejoin="round"/><path d="M15.8,25 Q16,28.2 18.2,28.4 Q20.4,28.2 20.6,25" fill="none" stroke="#fff" stroke-width="1.6"/></svg>
<svg style="position:absolute;left:1794px;top:18.8px;" width="40" height="40" viewBox="0 0 40 40"><defs><clipPath id="avc"><circle cx="20" cy="20" r="18.6"/></clipPath></defs>
<circle cx="20" cy="20" r="20" fill="#fff"/>
<g clip-path="url(#avc)">
<rect x="0" y="0" width="40" height="40" fill="#ebebeb"/>
<path d="M14.4,28 L26.2,28 L26.5,40 L14.1,40 Z" fill="#16809f"/>
<path d="M4,33.5 L14.4,28.4 L17.8,40 L3,40 Z M36.6,33.5 L26.2,28.4 L22.8,40 L37.6,40 Z" fill="#8d8d8d"/>
<path d="M15.2,22 Q15.4,28.6 20.3,28.8 Q25.2,28.6 25.4,22 Z" fill="#c9c9c6"/>
<path d="M13.8,8.6 L26.8,8.6 L26.8,14 Q27,25.5 20.3,25.8 Q13.6,25.5 13.8,14 Z" fill="#f0c2a2"/>
<path d="M13.4,17 Q12.6,4.2 20.2,4.3 Q27.9,4.2 27.2,17 Q26.4,9.2 20.3,8.8 Q14.2,9.2 13.4,17 Z" fill="#8c7660"/>
<ellipse cx="17.5" cy="14.9" rx="1" ry="0.7" fill="#5a7ea8"/><ellipse cx="23" cy="14.9" rx="1" ry="0.7" fill="#5a7ea8"/>
<path d="M17.2,21.6 Q20.3,23.6 23.4,21.6" fill="none" stroke="#fff" stroke-width="1"/>
</g></svg>
<svg style="position:absolute;left:1847px;top:44px;" width="15" height="10" viewBox="0 0 15 10"><polygon points="1.3,1.7 13.8,1.7 7.55,8.8" fill="#fff"/></svg>
</body></html>
